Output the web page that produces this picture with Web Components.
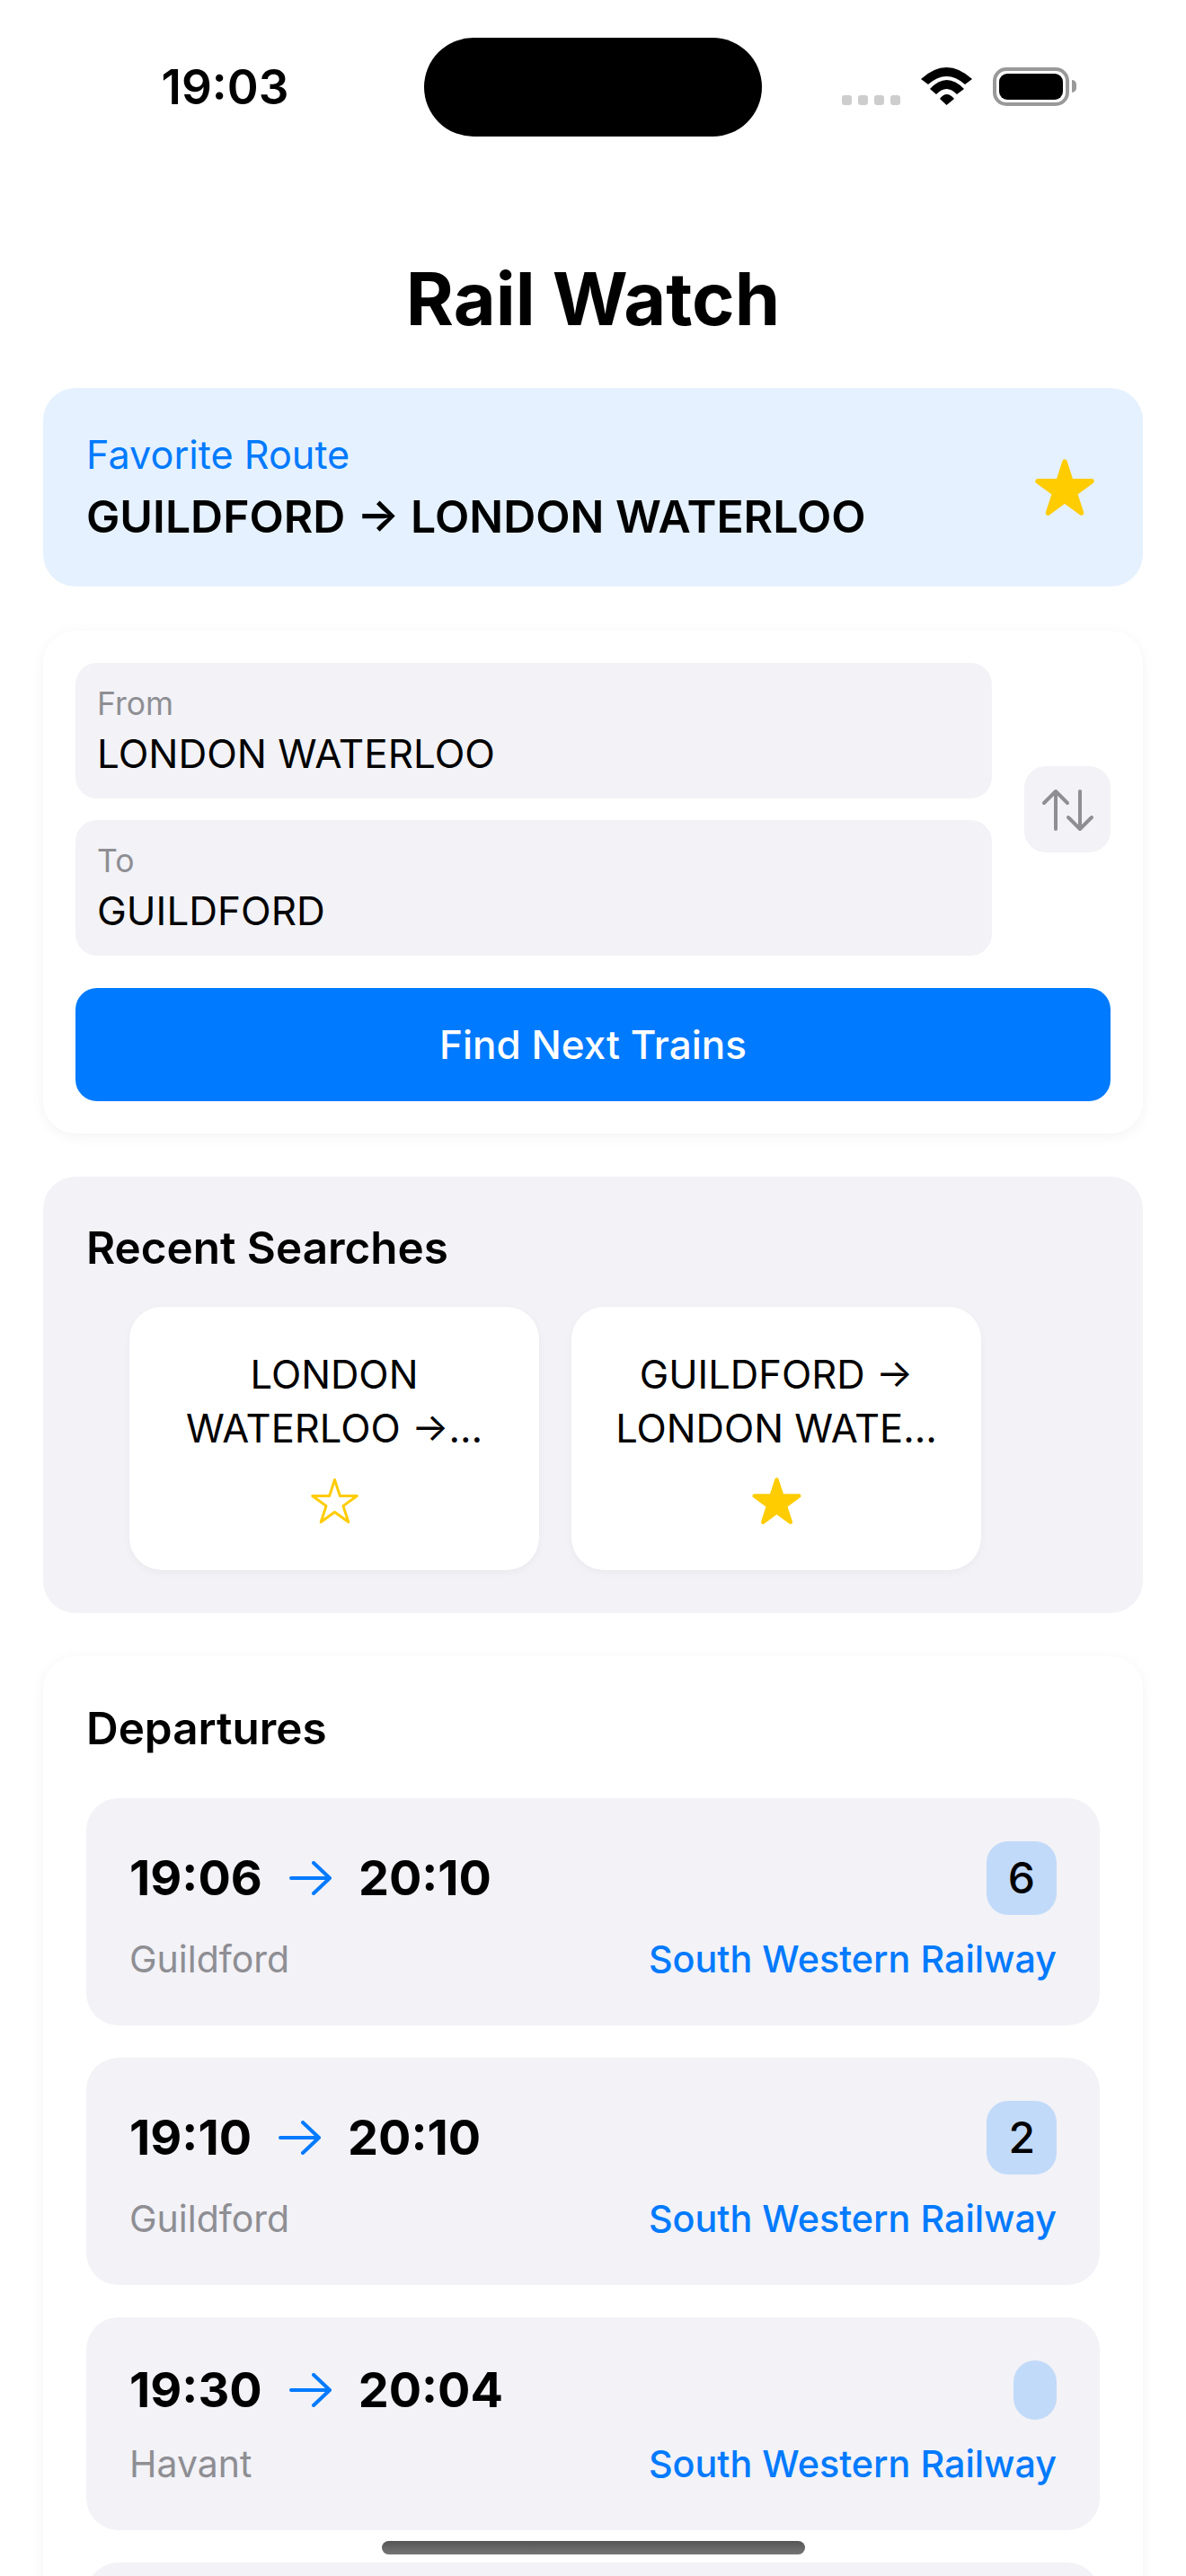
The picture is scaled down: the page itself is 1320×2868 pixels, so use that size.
<!doctype html>
<html lang="en"><head><meta charset="utf-8"><title>Rail Watch</title>
<style>
html,body{margin:0;padding:0;background:#fff;height:2868px;overflow:hidden}
body{font-family:Inter,"Liberation Sans",sans-serif;color:#000}
</style></head>
<body>
<rail-app>
  <status-bar></status-bar>
  <app-title>Rail Watch</app-title>
  <fav-route label="Favorite Route" route="GUILDFORD → LONDON WATERLOO"></fav-route>
  <route-form from="LONDON WATERLOO" to="GUILDFORD" action="Find Next Trains"></route-form>
  <recent-searches heading="Recent Searches">
    <recent-tile line1="LONDON" line2="WATERLOO →…"></recent-tile>
    <recent-tile line1="GUILDFORD →" line2="LONDON WATE…" filled></recent-tile>
  </recent-searches>
  <departure-list heading="Departures">
    <departure-row dep="19:06" arr="20:10" dest="Guildford" op="South Western Railway" platform="6"></departure-row>
    <departure-row dep="19:10" arr="20:10" dest="Guildford" op="South Western Railway" platform="2"></departure-row>
    <departure-row dep="19:30" arr="20:04" dest="Havant" op="South Western Railway" platform=""></departure-row>
    <departure-row></departure-row>
  </departure-list>
  <home-indicator></home-indicator>
</rail-app>
<script>
const STAR='M50 0 61.8 36.33H100L69.1 58.78 80.9 95.1 50 72.65 19.1 95.1 30.9 58.78 0 36.33H38.2Z';
function esc(s){return String(s==null?'':s).replace(/&/g,'&amp;').replace(/"/g,'&quot;').replace(/</g,'&lt;')}
class Base extends HTMLElement{
  constructor(){super();this.attachShadow({mode:'open'})}
  connectedCallback(){this.shadowRoot.innerHTML=this.render()}
  a(n){return esc(this.getAttribute(n))}
}
customElements.define('rail-app',class extends Base{render(){return `<style>
:host{display:block;position:relative;width:1320px;height:2868px;overflow:hidden;background:#fff}
.main{display:flex;flex-direction:column}
</style><div class="main"><slot></slot></div>`}});

customElements.define('status-bar',class extends Base{render(){return `<style>
:host{display:grid;grid-template-columns:472px 376px 472px;padding-top:42px;height:110px}
.time{display:flex;align-items:center;justify-content:center;font:600 53px/1 Inter,sans-serif;padding-left:29px;box-sizing:border-box}
.island{background:#000;border-radius:55px}
.right{display:flex;align-items:flex-start;padding:33px 0 0 89px}
.dots{display:flex;gap:7px;margin-top:31px}
.dots i{width:11px;height:11px;border-radius:3px;background:#cdcdcd}
.wifi{margin-left:23px;display:block}
.bat{margin-left:23px;width:85px;height:43px;box-sizing:border-box;border:4px solid #999;border-radius:15px;padding:3px;background:#fff}
.bat b{display:block;height:100%;background:#000;border-radius:9px}
.nub{width:5px;height:14px;margin:14px 0 0 3px;background:#999;border-radius:0 5px 5px 0}
</style>
<div class="time">19:03</div><div class="island"></div>
<div class="right"><div class="dots"><i></i><i></i><i></i><i></i></div>
<svg class="wifi" width="57" height="42" viewBox="0 0 57 42" fill="#000"><path d="M0 13Q28.5-13 57 13L49 19Q28.5 1 8 19Z"/><path d="M10 24Q28.5 4 48 24L40 30Q28.5 18 17 30Z"/><path d="M21 35Q28.5 25 37 35L28.5 42Z"/></svg>
<div class="bat"><b></b></div><div class="nub"></div></div>`}});

customElements.define('app-title',class extends Base{render(){return `<style>
:host{display:block;padding:131px 0 48px;text-align:center;font:700 81px/101px Inter,sans-serif}
</style><slot></slot>`}});

customElements.define('star-icon',class extends Base{render(){
 const f=this.hasAttribute('filled');const w=this.getAttribute('w')||55,h=this.getAttribute('h')||52;
 return `<style>:host{display:block;line-height:0}</style><svg width="${w}" height="${h}" viewBox="-5 -5 110 105"><path d="${STAR}" fill="${f?'#ffcc00':'none'}" stroke="#ffcc00" stroke-width="${f?9:6}" stroke-linejoin="round"/></svg>`}});

customElements.define('fav-route',class extends Base{render(){return `<style>
:host{display:flex;align-items:center;justify-content:space-between;margin:0 48px;height:221px;box-sizing:border-box;padding:0 54px 0 48px;background:#e5f1ff;border-radius:36px}
.l{font:400 43.2px/56px Inter,sans-serif;color:#007aff;margin-bottom:10px}
.r{font:600 49.9px/62px Inter,sans-serif}
.t{margin-top:-1px}
</style><div class="t"><div class="l">${this.a('label')}</div><div class="r">${this.a('route')}</div></div><star-icon filled w="66" h="63"></star-icon>`}});

customElements.define('station-field',class extends Base{render(){return `<style>
:host{display:block;box-sizing:border-box;height:151px;padding:23px 24px;background:#f2f2f7;border-radius:24px}
.l{font:400 35.5px/46px Inter,sans-serif;color:#8e8e93;margin-bottom:5px}
.v{font:400 44px/54px Inter,sans-serif}
</style><div class="l">${this.a('label')}</div><div class="v">${this.a('value')}</div>`}});

customElements.define('route-form',class extends Base{render(){return `<style>
:host{display:block;margin:49px 48px 0;padding:36px;background:#fff;border-radius:36px;box-shadow:0 3px 15px rgba(0,0,0,.05)}
.top{display:flex;align-items:center;gap:36px}
.fields{flex:1;display:flex;flex-direction:column;gap:24px}
.swap{width:96px;height:96px;border-radius:24px;background:#f2f2f7;line-height:0;flex:none}
.go{margin-top:36px;height:126px;display:flex;align-items:center;justify-content:center;border-radius:24px;background:#007aff;color:#fff;font:500 44px/54px Inter,sans-serif}
</style><div class="top"><div class="fields"><station-field label="From" value="${this.a('from')}"></station-field><station-field label="To" value="${this.a('to')}"></station-field></div>
<div class="swap"><svg width="96" height="96" viewBox="0 0 96 96" fill="none" stroke="#8e8e93" stroke-width="4" stroke-linecap="round" stroke-linejoin="round"><path d="M35 70V28M22 41 35 28 48 41M62 28V70M49 57 62 70 75 57"/></svg></div></div>
<div class="go">${this.a('action')}</div>`}});

customElements.define('recent-tile',class extends Base{render(){return `<style>
:host{display:flex;flex-direction:column;align-items:center;box-sizing:border-box;width:456px;height:293px;padding-top:45px;background:#fff;border-radius:36px;box-shadow:0 3px 10px rgba(0,0,0,.04);font:400 43.5px/60px Inter,sans-serif;text-align:center}
star-icon{margin-top:25px}
</style><div>${this.a('line1')}</div><div>${this.a('line2')}</div><star-icon ${this.hasAttribute('filled')?'filled':''} w="55" h="52"></star-icon>`}});

customElements.define('recent-searches',class extends Base{render(){return `<style>
:host{display:block;margin:48px 48px 0;padding:48px;background:#f2f2f7;border-radius:36px}
h2{margin:0 0 35px;font:600 49.4px/62px Inter,sans-serif}
.tiles{display:flex;gap:36px;padding-left:48px}
</style><h2>${this.a('heading')}</h2><div class="tiles"><slot></slot></div>`}});

customElements.define('departure-list',class extends Base{render(){return `<style>
:host{display:block;margin:48px 48px 0;padding:48px;background:#fff;border-radius:36px;box-shadow:0 3px 15px rgba(0,0,0,.05)}
h2{margin:0 0 48px;font:600 49.4px/64px Inter,sans-serif;height:62px}
.rows{display:flex;flex-direction:column;gap:36px}
</style><h2>${this.a('heading')}</h2><div class="rows"><slot></slot></div>`}});

customElements.define('departure-row',class extends Base{render(){
 if(!this.hasAttribute('dep'))return `<style>:host{display:block;height:253px;background:#f2f2f7;border-radius:36px}</style>`;
 const p=this.getAttribute('platform');
 return `<style>
:host{display:block;padding:48px;background:#f2f2f7;border-radius:36px}
.top{display:flex;align-items:center;justify-content:space-between}
.times{display:flex;align-items:center;height:66px;font:700 54px/66px Inter,sans-serif}
svg{display:block;margin:0 30px}
.badge{box-sizing:border-box;min-width:47px;min-height:66px;padding:12px 24px;background:#c2daf9;border-radius:24px;font:500 48px/58px Inter,sans-serif;text-align:center}
.sub{display:flex;justify-content:space-between;margin-top:24px;font-size:41px;line-height:51px}
.d{color:#8e8e93;font-weight:400}
.o{color:#007aff;font-weight:500;font-size:41.3px}
</style><div class="top"><div class="times"><span>${this.a('dep')}</span><svg width="47" height="38" viewBox="0 0 47 38" fill="none" stroke="#007aff" stroke-width="4" stroke-linecap="round" stroke-linejoin="round"><path d="M2 19H45M27 2 45 19 27 36"/></svg><span>${this.a('arr')}</span></div><div class="badge">${esc(p)}</div></div>
<div class="sub"><span class="d">${this.a('dest')}</span><span class="o">${this.a('op')}</span></div>`}});

customElements.define('home-indicator',class extends Base{render(){return `<style>
:host{position:absolute;left:425px;top:2829px;width:471px;height:15px;border-radius:8px;background:linear-gradient(#555,#767676)}
</style>`}});
</script>
</body></html>
